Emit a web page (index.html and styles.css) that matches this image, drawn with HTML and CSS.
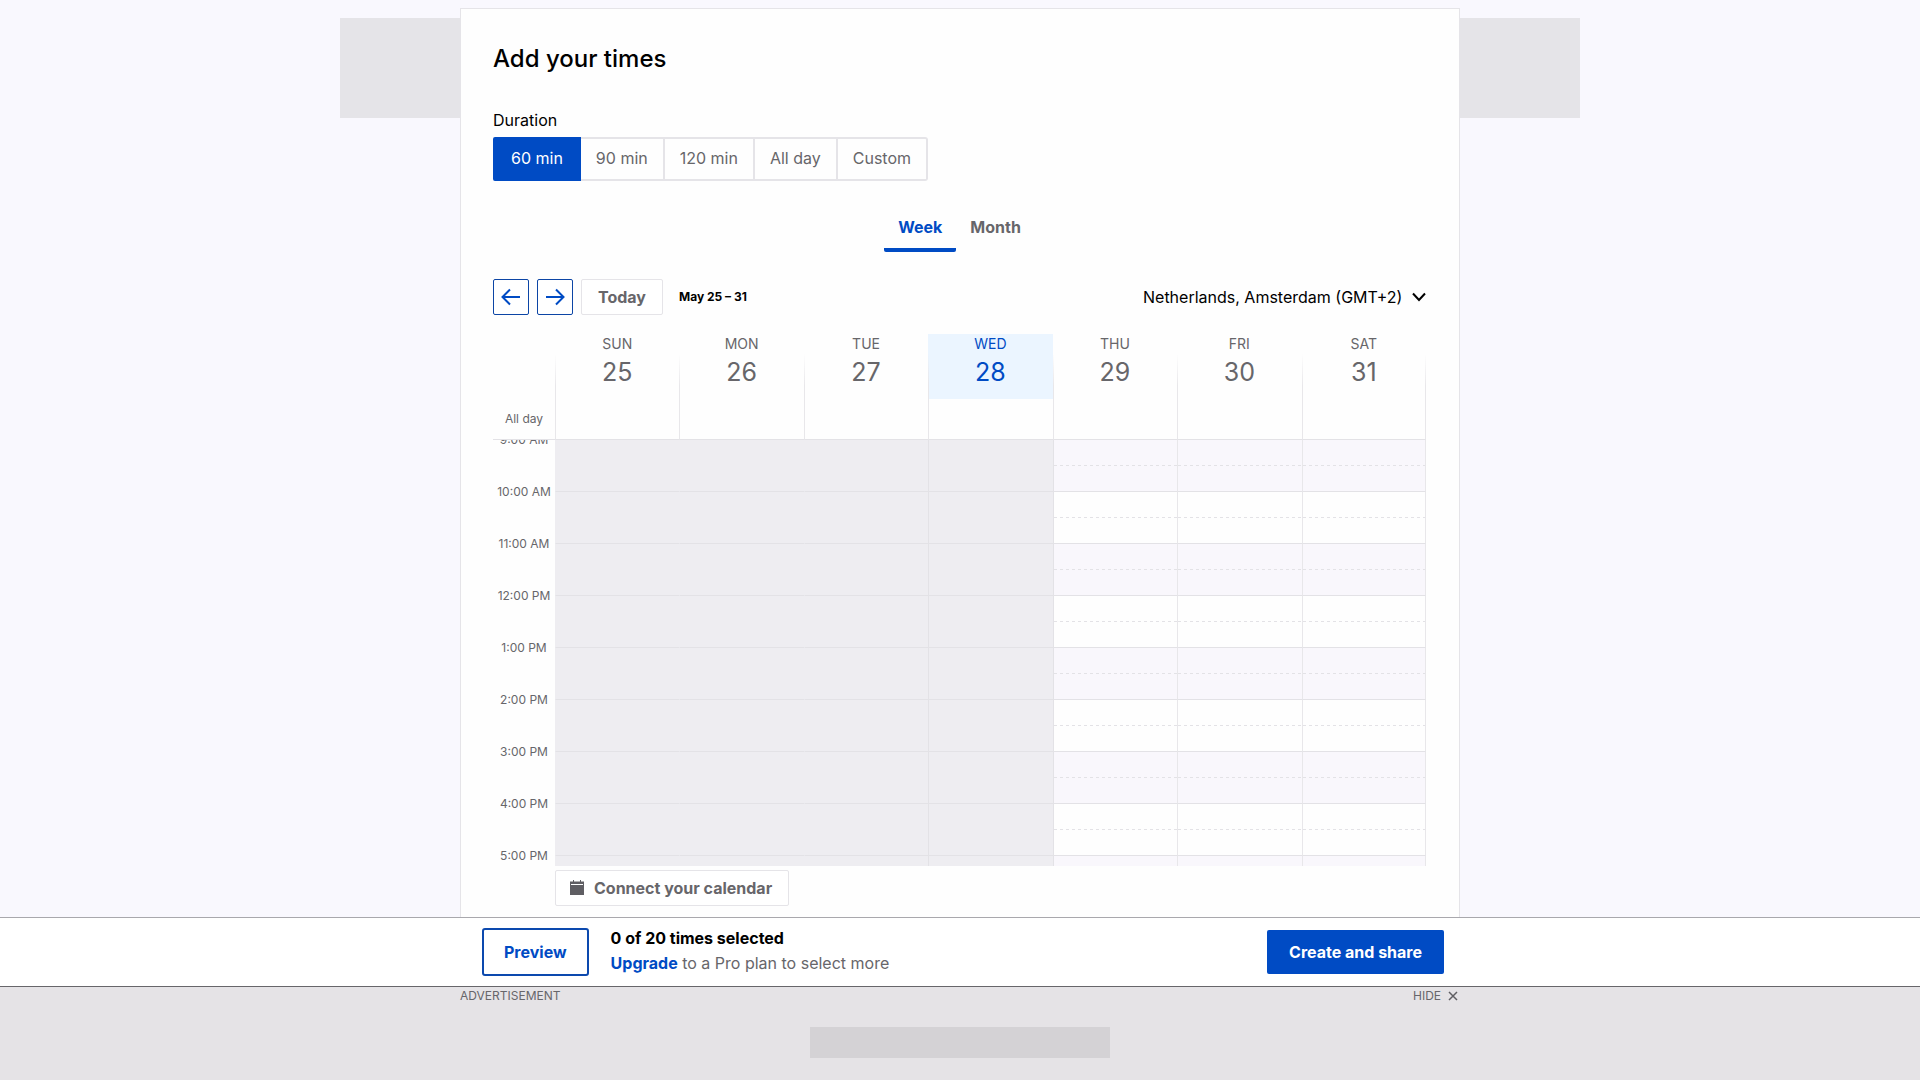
FILE: index.html
```html
<!DOCTYPE html>
<html lang="en">
<head>
    <meta charset="UTF-8">
    <meta name="viewport" content="width=device-width, initial-scale=1.0">
    <title>Add your times</title>
    <link rel="stylesheet" href="styles.css">
</head>
<body>
    <main class="page">
        <div class="banner-ad"></div>
        <section class="card">
            <h1>Add your times</h1>

            <fieldset class="duration">
                <legend>Duration</legend>
                <div class="segments">
                    <label><input type="radio" name="duration" checked><span>60 min</span></label>
                    <label><input type="radio" name="duration"><span>90 min</span></label>
                    <label><input type="radio" name="duration"><span>120 min</span></label>
                    <label><input type="radio" name="duration"><span>All day</span></label>
                    <label><input type="radio" name="duration"><span>Custom</span></label>
                </div>
            </fieldset>

            <div class="tabs" role="tablist">
                <button class="tab active" role="tab" aria-selected="true">Week</button>
                <button class="tab" role="tab" aria-selected="false">Month</button>
            </div>

            <div class="toolbar">
                <button class="nav-btn" aria-label="Previous week">
                    <svg width="20" height="20" viewBox="0 0 20 20"><path d="M19 10H2M9 2.5L1.5 10L9 17.5"/></svg>
                </button>
                <button class="nav-btn" aria-label="Next week">
                    <svg width="20" height="20" viewBox="0 0 20 20"><path d="M1 10h17M11 2.5L18.5 10L11 17.5"/></svg>
                </button>
                <button class="today-btn">Today</button>
                <strong class="range">May 25 – 31</strong>
                <div class="timezone">
                    <select aria-label="Time zone">
                        <option>Netherlands, Amsterdam (GMT+2)</option>
                    </select>
                    <svg width="14" height="10" viewBox="0 0 14 10"><path d="M1 1.5L7 8L13 1.5"/></svg>
                </div>
            </div>

            <table class="calendar calendar-head">
                <thead>
                    <tr>
                        <td class="time"></td>
                        <th>SUN<b>25</b></th>
                        <th>MON<b>26</b></th>
                        <th>TUE<b>27</b></th>
                        <th class="today">WED<b>28</b></th>
                        <th>THU<b>29</b></th>
                        <th>FRI<b>30</b></th>
                        <th>SAT<b>31</b></th>
                    </tr>
                </thead>
                <tbody>
                    <tr class="all-day"><th class="time">All day</th><td></td><td></td><td></td><td></td><td></td><td></td><td></td></tr>
                </tbody>
            </table>
            <div class="calendar-scroll">
                <table class="calendar calendar-body">
                    <tbody>
                        <tr><th class="time"><span>9:00 AM</span></th><td class="past"></td><td class="past"></td><td class="past"></td><td class="past"></td><td></td><td></td><td></td></tr>
                        <tr><th class="time"><span>10:00 AM</span></th><td class="past"></td><td class="past"></td><td class="past"></td><td class="past"></td><td></td><td></td><td></td></tr>
                        <tr><th class="time"><span>11:00 AM</span></th><td class="past"></td><td class="past"></td><td class="past"></td><td class="past"></td><td></td><td></td><td></td></tr>
                        <tr><th class="time"><span>12:00 PM</span></th><td class="past"></td><td class="past"></td><td class="past"></td><td class="past"></td><td></td><td></td><td></td></tr>
                        <tr><th class="time"><span>1:00 PM</span></th><td class="past"></td><td class="past"></td><td class="past"></td><td class="past"></td><td></td><td></td><td></td></tr>
                        <tr><th class="time"><span>2:00 PM</span></th><td class="past"></td><td class="past"></td><td class="past"></td><td class="past"></td><td></td><td></td><td></td></tr>
                        <tr><th class="time"><span>3:00 PM</span></th><td class="past"></td><td class="past"></td><td class="past"></td><td class="past"></td><td></td><td></td><td></td></tr>
                        <tr><th class="time"><span>4:00 PM</span></th><td class="past"></td><td class="past"></td><td class="past"></td><td class="past"></td><td></td><td></td><td></td></tr>
                        <tr><th class="time"><span>5:00 PM</span></th><td class="past"></td><td class="past"></td><td class="past"></td><td class="past"></td><td></td><td></td><td></td></tr>
                    </tbody>
                </table>
            </div>
            <button class="connect-btn">
                <svg width="14" height="16" viewBox="0 0 14 16"><path d="M0 1.5h14V15H0z"/><path class="line" d="M1 4.5h12"/><path class="ring" d="M3.5 0v4M10.5 0v4"/></svg>
                Connect your calendar
            </button>
        </section>
    </main>

    <div class="action-bar">
        <div class="action-inner">
            <button class="preview-btn">Preview</button>
            <div class="selection">
                <strong>0 of 20 times selected</strong>
                <p><a href="#">Upgrade</a> to a Pro plan to select more</p>
            </div>
            <button class="create-btn">Create and share</button>
        </div>
    </div>

    <footer class="ad">
        <div class="ad-head">
            <span>ADVERTISEMENT</span>
            <button class="hide-btn">HIDE <svg width="10" height="10" viewBox="0 0 10 10"><path d="M1 1l8 8M9 1L1 9"/></svg></button>
        </div>
        <div class="ad-slot"></div>
    </footer>
</body>
</html>
```

FILE: styles.css
```css
* { box-sizing: border-box; }
body { margin: 0; height: 100vh; display: flex; flex-direction: column; font: 16px/24px Inter, "Liberation Sans", sans-serif; color: #000; background: #f9f8fe; }
button, select { font: inherit; color: inherit; cursor: pointer; }
button { font-weight: 700; padding: 0 0 1px; border-radius: 2px; }
svg { fill: none; flex: none; }

.page { flex: 1; min-height: 0; overflow: hidden; position: relative; padding-top: 8px; }
.banner-ad { position: absolute; top: 18px; left: 0; right: 0; margin: 0 auto; max-width: 1240px; height: 100px; background: #e5e4e8; }
.card { position: relative; max-width: 1000px; margin: 0 auto; padding: 32px 33px 48px 32px; background: #fefefe; border: 1px solid #e5e4e8; }
h1 { margin: 0; font-size: 24px; line-height: 36px; font-weight: 500; }

.duration { border: 0; margin: 31px 0 0; padding: 0; }
.duration legend { padding: 0; margin-bottom: 5px; }
.segments { display: flex; }
.segments label { cursor: pointer; }
.segments input { position: absolute; opacity: 0; }
.segments span { display: block; padding: 7px 15px 9px; border: 2px solid #e5e4e8; border-left-width: 0; color: #67666a; }
.segments label:first-child span { padding-left: 16px; padding-right: 16px; border-left-width: 2px; border-radius: 2px 0 0 2px; }
.segments label:last-child span { border-radius: 0 3px 3px 0; }
.segments input:checked + span { background: #004bc4; border-color: #004bc4; color: #fff; }

.tabs { display: flex; justify-content: center; margin-top: 24px; }
.tab { height: 47px; padding: 0 14px; border: 0; border-bottom: 4px solid transparent; background: none; color: #67666a; }
.tab.active { color: #004bc4; border-color: #004bc4; }

.toolbar { display: flex; align-items: center; gap: 8px; margin-top: 27px; }
.nav-btn { width: 36px; height: 36px; padding: 0; display: grid; place-items: center; border: 1px solid #0c45a5; background: #fff; }
.nav-btn path { stroke: #004bc4; stroke-width: 2; }
.today-btn { height: 36px; padding: 0 16px 1px; border: 1px solid #e5e4e8; background: #fff; color: #67666a; }
.range { margin-left: 8px; font-size: 12px; }
.timezone { margin-left: auto; display: flex; align-items: center; gap: 9px; }
.timezone select { appearance: none; border: 0; padding: 0 0 1px; background: none; }
.timezone path { stroke: #000; stroke-width: 2; }

.calendar { width: 100%; table-layout: fixed; border-collapse: separate; border-spacing: 0; }
.calendar th, .calendar td { padding: 0; font-weight: 400; color: #67666a; }
.calendar .time { width: 62px; font-size: 12px; line-height: 16px; }
.calendar-head { margin-top: 19px; }
.calendar-head thead th { height: 65px; vertical-align: top; font-size: 14px; line-height: 20px; background: linear-gradient(transparent 30%, #e8e7ea 80%) left / 1px 100% no-repeat; }
.calendar-head thead th:last-child { background: linear-gradient(transparent 30%, #e8e7ea 80%) left / 1px 100% no-repeat, linear-gradient(transparent 30%, #e8e7ea 80%) right / 1px 100% no-repeat; }
.calendar-head b { display: block; font-size: 25px; line-height: 37px; font-weight: 400; }
.calendar-head .today { color: #004bc4; background-color: #ebf5ff; }
.all-day th, .all-day td { height: 41px; border-bottom: 1px solid #e3e2e6; }
.all-day td { border-left: 1px solid #e8e7ea; }
.all-day td:last-child, .calendar-body td:last-child { border-right: 1px solid #e8e7ea; }

.calendar-scroll { height: 426px; overflow: hidden; }
.calendar-body td { height: 52px; border-left: 1px solid #e8e7ea; border-bottom: 1px solid #e3e2e6; background: repeating-linear-gradient(90deg, #e3e2e6 0 3px, transparent 3px 6px) 0 25px / 100% 1px no-repeat; }
.calendar-body tr:nth-child(odd) td { background-color: #f9f7fc; }
.calendar-body tr td.past { background: #eeedf1; border-left-color: #eeedf1; }
.calendar-body td.past:nth-child(5), .calendar-body .past + td:not(.past) { border-left-color: #e3e2e6; }
.calendar-body .time { vertical-align: top; }
/* hour labels sit across the row line */
.calendar-body .time span { display: block; margin-top: -8px; }

.connect-btn { display: flex; align-items: center; gap: 10px; height: 36px; margin: 4px 0 0 62px; padding: 0 16px 1px 14px; border: 1px solid #e5e4e8; background: #fff; color: #67666a; }
.connect-btn path { fill: #5f5e63; }
.connect-btn .line { stroke: #fff; }
.connect-btn .ring { stroke: #5f5e63; }

.action-bar { background: #fff; border-top: 1px solid #a9a8ad; border-bottom: 1px solid #67666a; }
.action-inner { display: flex; align-items: center; max-width: 1000px; height: 68px; margin: 0 auto; padding: 0 16px 0 22px; }
.preview-btn { height: 48px; padding: 0 20px 1px; border: 2px solid #0c49ae; border-radius: 3px; background: #fff; color: #004bc4; }
.selection { margin-left: 22px; line-height: 25px; padding-bottom: 2px; }
.selection p { margin: 0; color: #67666a; }
.selection a { color: #004bc4; font-weight: 700; text-decoration: none; }
.create-btn { margin-left: auto; height: 44px; padding: 0 22px 1px; border: 0; background: #004bc4; color: #fff; }

.ad { height: 93px; background: #e5e3e6; color: #67666a; }
.ad-head { display: flex; justify-content: space-between; max-width: 1000px; margin: 0 auto; font-size: 12px; line-height: 18px; }
.hide-btn { display: flex; align-items: center; gap: 7px; border: 0; padding: 0 2px; background: none; font-weight: 400; }
.hide-btn path { stroke: #5f5e63; stroke-width: 1.5; }
.ad-slot { max-width: 300px; height: 31px; margin: 22px auto 0; background: #d4d2d5; }
```
